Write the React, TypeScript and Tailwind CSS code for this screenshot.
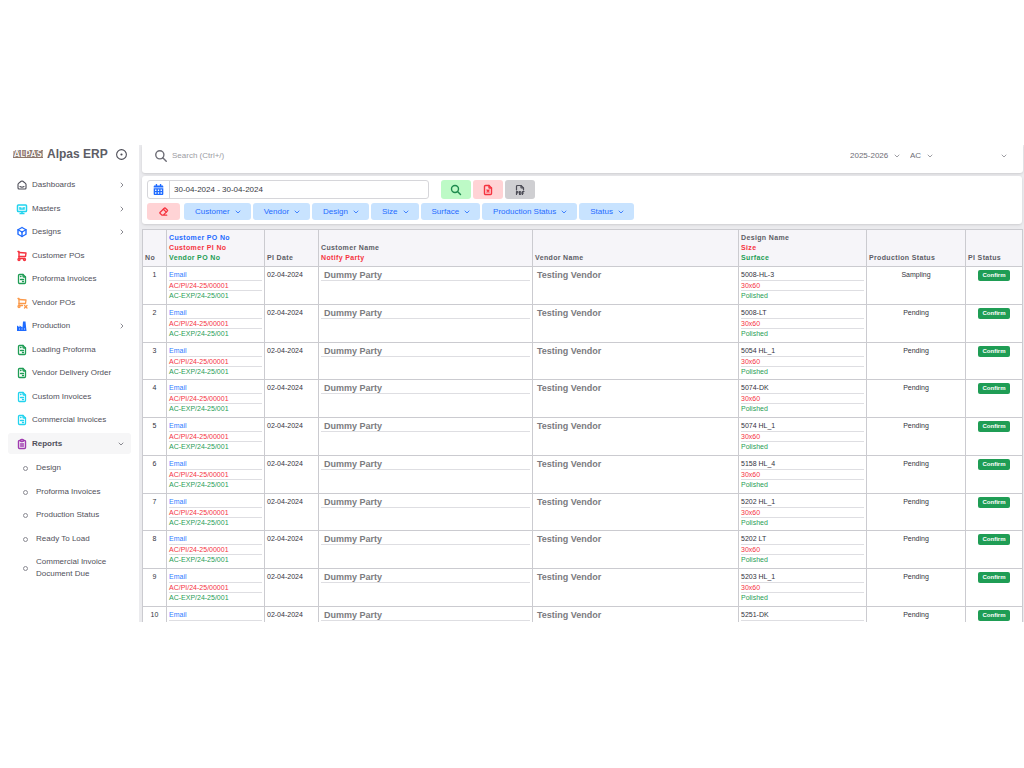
import { useState } from "react";
import type { ReactNode } from "react";
import {
  TbSmartHome,
  TbShoppingCart,
  TbShoppingCartX,
  TbFileInvoice,
  TbClipboardText,
  TbBox,
  TbChevronRight,
  TbChevronDown,
  TbSearch,
  TbEraser,
  TbFileX,
  TbFileTypePdf,
  TbCircleDot,
} from "react-icons/tb";
import { FaCalendarAlt } from "react-icons/fa";

interface MenuItem {
  label: string;
  icon: ReactNode;
  hasChildren?: boolean;
}

interface ReportRow {
  design: string;
  status: string;
}

/* ================= ICONS ================= */
function MonitorIcon() {
  return (
    <svg viewBox="0 0 24 24" className="size-[12px] text-[#22d3ee]" fill="none" stroke="currentColor" strokeWidth="3">
      <rect x="3" y="4" width="18" height="13" rx="1.5" />
      <path d="M7 21h10M12 17v4M8 8v4h8V8M12 8v1" />
    </svg>
  );
}

function FactoryIcon() {
  return (
    <svg viewBox="0 0 24 24" className="size-[12px] text-[#1f6bff]" fill="currentColor">
      <path d="M2 22V11l5 3.5V11l6 4 1-12h5l2 19z" />
      <path d="M6 18h2M11 18h2M16 18h2" stroke="#fff" strokeWidth="1.6" />
    </svg>
  );
}

function Logo() {
  return (
    <svg viewBox="0 0 30 9" className="h-[9px] w-[30px]" role="img" aria-label="Alpas logo">
      <rect x="0" y="1" width="30" height="7" fill="#c9b5a8" />
      <rect x="6" y="0" width="24" height="1" fill="#a08b7f" />
      <text
        x="15"
        y="7"
        textAnchor="middle"
        fontFamily="DejaVu Sans, sans-serif"
        fontSize="8"
        fontWeight="700"
        fill="#f4efec"
        stroke="#4f4039"
        strokeWidth="1"
        paintOrder="stroke"
      >
        ALPAS
      </text>
      <rect x="0" y="7" width="30" height="1" fill="#8d7568" />
    </svg>
  );
}

const greenInvoice = <TbFileInvoice size={12} strokeWidth={2.6} className="text-[#1f9d55]" />;
const cyanInvoice = <TbFileInvoice size={12} strokeWidth={2.6} className="text-[#22d3ee]" />;

const menu: MenuItem[] = [
  {
    label: "Dashboards",
    icon: <TbSmartHome size={12} strokeWidth={2.2} className="text-[#4b4b55]" />,
    hasChildren: true,
  },
  { label: "Masters", icon: <MonitorIcon />, hasChildren: true },
  {
    label: "Designs",
    icon: <TbBox size={12} strokeWidth={2.8} className="text-[#1f6bff]" />,
    hasChildren: true,
  },
  { label: "Customer POs", icon: <TbShoppingCart size={12} strokeWidth={2.8} className="text-[#f5333f]" /> },
  { label: "Proforma Invoices", icon: greenInvoice },
  { label: "Vendor POs", icon: <TbShoppingCartX size={12} strokeWidth={2.6} className="text-[#fb9a4b]" /> },
  { label: "Production", icon: <FactoryIcon />, hasChildren: true },
  { label: "Loading Proforma", icon: greenInvoice },
  { label: "Vendor Delivery Order", icon: greenInvoice },
  { label: "Custom Invoices", icon: cyanInvoice },
  { label: "Commercial Invoices", icon: cyanInvoice },
];

const reports = ["Design", "Proforma Invoices", "Production Status", "Ready To Load"];

const filters = ["Customer", "Vendor", "Design", "Size", "Surface", "Production Status", "Status"];

const rows: ReportRow[] = [
  { design: "5008-HL-3", status: "Sampling" },
  { design: "5008-LT", status: "Pending" },
  { design: "5054 HL_1", status: "Pending" },
  { design: "5074-DK", status: "Pending" },
  { design: "5074 HL_1", status: "Pending" },
  { design: "5158 HL_4", status: "Pending" },
  { design: "5202 HL_1", status: "Pending" },
  { design: "5202 LT", status: "Pending" },
  { design: "5203 HL_1", status: "Pending" },
  { design: "5251-DK", status: "Pending" },
];

/* ================= SIDEBAR ================= */
function Sidebar() {
  return (
    <aside className="w-[139px] shrink-0 bg-white">
      <div className="flex h-[18px] items-center pl-[13px]">
        <Logo />
        <span className="ml-[4px] text-[12px] leading-[18px] font-bold text-[#5d5d66]">Alpas ERP</span>
        <button aria-label="Pin menu" className="ml-[7px] text-[#4b4b55]">
          <TbCircleDot size={13} />
        </button>
      </div>

      <nav className="mt-[10px] px-[8px] text-[8px] text-[#50505a]">
        <ul>
          {menu.map((item) => (
            <li key={item.label} className="h-[24px] even:h-[23px]">
              <a href="#" className="flex h-[24px] items-center pr-[5px] pl-[8px]">
                {item.icon}
                <span className="ml-[4px] flex-1 whitespace-nowrap">{item.label}</span>
                {item.hasChildren && <TbChevronRight size={8} />}
              </a>
            </li>
          ))}
          <li className="h-[23px]">
            <a
              href="#"
              className="mt-px flex h-[21px] items-center rounded-[3px] bg-[#f6f6f7] pr-[6px] pl-[8px] font-bold"
            >
              <TbClipboardText size={12} strokeWidth={2.8} className="text-[#a03bb0]" />
              <span className="ml-[4px] flex-1">Reports</span>
              <TbChevronDown size={8} />
            </a>
          </li>
        </ul>
        <ul>
          {reports.map((label) => (
            <li key={label} className="h-[24px] even:h-[23px]">
              <a href="#" className="flex h-[24px] items-center pl-[15px]">
                <span className="size-[5px] rounded-full border border-[#8b8b93]" />
                <span className="ml-[8px]">{label}</span>
              </a>
            </li>
          ))}
          <li>
            <a href="#" className="mt-[6px] flex items-center pl-[15px] leading-[12px]">
              <span className="size-[5px] rounded-full border border-[#8b8b93]" />
              <span className="ml-[8px] w-[80px]">Commercial Invoice Document Due</span>
            </a>
          </li>
        </ul>
      </nav>
    </aside>
  );
}

/* ================= TOP BAR ================= */
function PlainSelect({ label, value, width }: { label: string; value: string; width: string }) {
  return (
    <label aria-label={label} className="flex items-center">
      <select
        className={`h-[14px] appearance-none bg-transparent text-[8px] leading-[14px] outline-none ${width}`}
        defaultValue={value}
      >
        <option>{value}</option>
      </select>
      <TbChevronDown size={8} className="pointer-events-none -ml-[8px]" />
    </label>
  );
}

function TopBar() {
  return (
    <header className="flex h-[28px] items-center rounded-b-[3px] bg-white pr-[15px] pb-[6px] pl-[12px] text-[#6d6d76] shadow-sm">
      <TbSearch size={14} strokeWidth={2.4} />
      <input
        aria-label="Search"
        placeholder="Search (Ctrl+/)"
        className="ml-[4px] min-w-0 flex-1 text-[8px] outline-none placeholder:text-[#9b9ba3]"
      />
      <div className="flex items-center">
        <PlainSelect label="Financial year" value="2025-2026" width="w-[51px]" />
        <span className="w-[9px]" />
        <PlainSelect label="Company" value="AC" width="w-[24px]" />
        <button aria-label="User menu" className="ml-[66px]">
          <TbChevronDown size={8} />
        </button>
      </div>
    </header>
  );
}

/* ================= FILTERS ================= */
function FilterCard() {
  const [range, setRange] = useState("30-04-2024 - 30-04-2024");

  return (
    <section className="mt-[3px] mr-px rounded-[3px] bg-white px-[5px] pt-[4px] pb-[4px] shadow-sm">
      <div className="flex h-[19px] items-center">
        <div className="flex h-[19px] w-[282px] items-center rounded-[3px] border border-[#d6d6da]">
          <label
            htmlFor="range"
            className="flex h-full w-[22px] items-center justify-center border-r border-[#d6d6da] text-[#1f6bff]"
          >
            <FaCalendarAlt size={11} aria-label="Date range" />
          </label>
          <input
            id="range"
            value={range}
            onChange={(e) => setRange(e.target.value)}
            className="min-w-0 flex-1 px-[4px] text-[8px] text-[#3a3a44] outline-none"
          />
        </div>
        <div className="ml-[12px] flex gap-[2px]">
          <button
            aria-label="Search"
            className="flex h-[19px] w-[30px] items-center justify-center rounded-[3px] bg-[#bdfac6] text-[#1d8a4e]"
          >
            <TbSearch size={12} strokeWidth={2.8} />
          </button>
          <button
            aria-label="Export Excel"
            className="flex h-[19px] w-[30px] items-center justify-center rounded-[3px] bg-[#ffd3d5] text-[#f5333f]"
          >
            <TbFileX size={12} strokeWidth={2.8} />
          </button>
          <button
            aria-label="Export PDF"
            className="flex h-[19px] w-[30px] items-center justify-center rounded-[3px] bg-[#cfcfd2] text-[#4b4b55]"
          >
            <TbFileTypePdf size={12} strokeWidth={2.4} />
          </button>
        </div>
      </div>

      <div className="mt-[4px] flex items-center gap-[2px] text-[8px] text-[#1f6bff]">
        <button
          aria-label="Clear filters"
          className="mr-[2px] flex h-[17px] w-[33px] items-center justify-center rounded-[3px] bg-[#ffd3d5] text-[#f5333f]"
        >
          <TbEraser size={11} strokeWidth={2.8} />
        </button>
        {filters.map((name) => (
          <button
            key={name}
            className="flex h-[17px] items-center gap-[4px] rounded-[3px] bg-[#c8e3ff] pr-[9px] pl-[11px] whitespace-nowrap"
          >
            {name}
            <TbChevronDown size={8} strokeWidth={2.4} />
          </button>
        ))}
      </div>
    </section>
  );
}

/* ================= TABLE ================= */
function Head({ children }: { children: ReactNode }) {
  return (
    <th className="border border-[#cbcbd0] px-[2px] pb-[3px] text-left align-bottom font-bold whitespace-nowrap">
      {children}
    </th>
  );
}

function ReportTable() {
  return (
    <table className="mt-[5px] w-full table-fixed border-collapse bg-white text-[7px] text-[#33333d]">
      <colgroup>
        <col className="w-[24px]" />
        <col className="w-[98px]" />
        <col className="w-[54px]" />
        <col />
        <col className="w-[206px]" />
        <col className="w-[128px]" />
        <col className="w-[99px]" />
        <col className="w-[57px]" />
      </colgroup>
      <thead className="bg-[#f6f5f9] leading-[10px] tracking-wider text-[#5d5d66]">
        <tr className="h-[37px]">
          <Head>No</Head>
          <Head>
            <div className="text-[#1f6bff]">Customer PO No</div>
            <div className="text-[#f5333f]">Customer PI No</div>
            <div className="text-[#1f9d55]">Vendor PO No</div>
          </Head>
          <Head>PI Date</Head>
          <Head>
            <div>Customer Name</div>
            <div className="text-[#f5333f]">Notify Party</div>
          </Head>
          <Head>Vendor Name</Head>
          <Head>
            <div>Design Name</div>
            <div className="text-[#f5333f]">Size</div>
            <div className="text-[#1f9d55]">Surface</div>
          </Head>
          <Head>Production Status</Head>
          <Head>PI Status</Head>
        </tr>
      </thead>
      <tbody className="leading-[10px]">
        {rows.map((row, index) => (
          <tr
            key={row.design}
            className="h-[38px] nth-[4n+3]:h-[37px] [&>td]:border [&>td]:border-[#cbcbd0] [&>td]:px-[2px] [&>td]:pt-[3px] [&>td]:align-top"
          >
            <td className="text-center">{index + 1}</td>
            <td>
              <div className="h-[11px] border-b border-[#dedee2] text-[#2f7dff]">Email</div>
              <div className="h-[10px] border-b border-[#dedee2] text-[#f5333f]">AC/PI/24-25/00001</div>
              <div className="h-[11px] text-[#1f9d55]">AC-EXP/24-25/001</div>
            </td>
            <td>02-04-2024</td>
            <td>
              <div className="h-[11px] border-b border-[#dedee2] pl-[3px] text-[9px] font-bold text-[#7b7b80]">
                Dummy Party
              </div>
            </td>
            <td>
              <div className="pl-[2px] text-[9px] font-bold text-[#7b7b80]">Testing Vendor</div>
            </td>
            <td>
              <div className="h-[11px] border-b border-[#dedee2]">{row.design}</div>
              <div className="h-[10px] border-b border-[#dedee2] text-[#f5333f]">30x60</div>
              <div className="h-[11px] text-[#1f9d55]">Polished</div>
            </td>
            <td className="text-center">{row.status}</td>
            <td>
              <span className="mx-auto block h-[11px] w-[32px] rounded-[2px] bg-[#1f9d55] text-center text-[6px] leading-[11px] font-bold text-white">
                Confirm
              </span>
            </td>
          </tr>
        ))}
      </tbody>
    </table>
  );
}

export default function App() {
  return (
    <div className="h-screen bg-white pt-[145px] pb-[146px] font-['Liberation_Sans',Arial,sans-serif]">
      <div className="flex h-full overflow-hidden">
        <Sidebar />
        <main className="min-w-0 flex-1 bg-[#ebebee] pr-px pl-[3px]">
          <TopBar />
          <FilterCard />
          <ReportTable />
        </main>
      </div>
    </div>
  );
}
